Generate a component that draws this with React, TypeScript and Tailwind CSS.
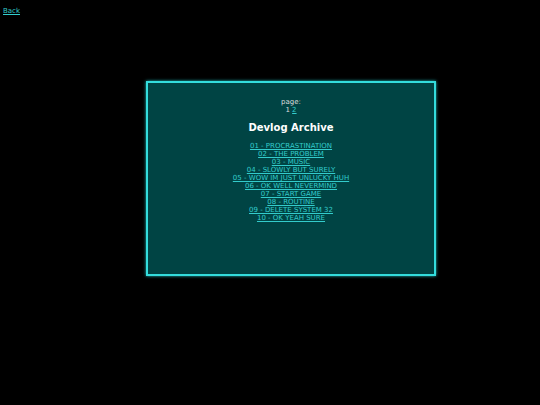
const posts = [
  "01 - PROCRASTINATION",
  "02 - THE PROBLEM",
  "03 - MUSIC",
  "04 - SLOWLY BUT SURELY",
  "05 - WOW IM JUST UNLUCKY HUH",
  "06 - OK WELL NEVERMIND",
  "07 - START GAME",
  "08 - ROUTINE",
  "09 - DELETE SYSTEM 32",
  "10 - OK YEAH SURE",
];

export default function App() {
  return (
    <div className="min-h-[405px] bg-black font-['DejaVu_Sans',Verdana,sans-serif] text-[7px] leading-[8px]">
      {/* Back link */}
      <div className="px-[3px] pt-[7px]">
        <a href="#" className="text-[#33cccc] underline">
          Back
        </a>
      </div>

      {/* Archive panel */}
      <div className="ml-[146px] mt-[66px] flex h-[195px] w-[290px] flex-col items-center border-2 border-[#33dddd] bg-[#004444] pt-[15px] text-center shadow-[0_0_3px_#22bbbb]">
        <p className="text-[#dddddd]">page:</p>
        <p className="text-[#dddddd]">
          1{" "}
          <a href="#" className="text-[#33cccc] underline">
            2
          </a>
        </p>
        <h1 className="mt-[8px] text-[10px] font-bold leading-[12px] text-white">
          Devlog Archive
        </h1>
        <ul className="mt-[8px] flex flex-col items-center">
          {posts.map((p) => (
            <li key={p}>
              <a href="#" className="text-[#33cccc] underline">
                {p}
              </a>
            </li>
          ))}
        </ul>
      </div>
    </div>
  );
}
